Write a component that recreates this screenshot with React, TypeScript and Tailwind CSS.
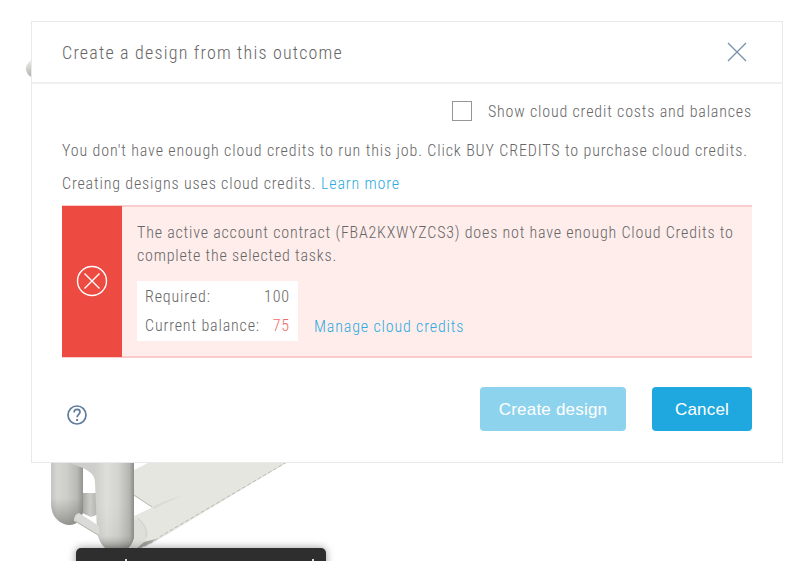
function ModelView() {
  return (
    <svg className="absolute inset-0 h-[561px] w-[800px]" viewBox="0 0 800 561" aria-hidden="true">
      <defs>
        <linearGradient id="tubeBack" x1="51" x2="83" y1="0" y2="0" gradientUnits="userSpaceOnUse">
          <stop offset="0" stopColor="#c4c5c0" />
          <stop offset="0.2" stopColor="#d5d6d1" />
          <stop offset="0.5" stopColor="#cdcec9" />
          <stop offset="0.82" stopColor="#b8b9b4" />
          <stop offset="1" stopColor="#92938f" />
        </linearGradient>
        <linearGradient id="tubeFront" x1="95" x2="134" y1="0" y2="0" gradientUnits="userSpaceOnUse">
          <stop offset="0" stopColor="#cecfca" />
          <stop offset="0.3" stopColor="#dedfda" />
          <stop offset="0.6" stopColor="#d3d4cf" />
          <stop offset="0.88" stopColor="#b5b6b1" />
          <stop offset="1" stopColor="#8b8c88" />
        </linearGradient>
        <linearGradient id="footShade" x1="0" x2="0" y1="505" y2="552" gradientUnits="userSpaceOnUse">
          <stop offset="0" stopColor="#777872" stopOpacity="0" />
          <stop offset="0.65" stopColor="#777872" stopOpacity="0.08" />
          <stop offset="1" stopColor="#5d5e58" stopOpacity="0.55" />
        </linearGradient>
        <linearGradient id="backShade" x1="0" x2="0" y1="498" y2="526" gradientUnits="userSpaceOnUse">
          <stop offset="0" stopColor="#777872" stopOpacity="0" />
          <stop offset="1" stopColor="#666760" stopOpacity="0.6" />
        </linearGradient>
        <linearGradient id="crossPiece" x1="83" x2="97" y1="0" y2="0" gradientUnits="userSpaceOnUse">
          <stop offset="0" stopColor="#a9aaa5" />
          <stop offset="0.5" stopColor="#cbccc7" />
          <stop offset="1" stopColor="#b3b4af" />
        </linearGradient>
        <linearGradient id="knob" x1="26" x2="31" y1="62" y2="76" gradientUnits="userSpaceOnUse">
          <stop offset="0" stopColor="#e9e9e6" />
          <stop offset="1" stopColor="#b4b5af" />
        </linearGradient>
      </defs>
      <path d="M32 60 C28 62 25.500 66 26 70 C27 74 29 76 32 77.500 Z" fill="url(#knob)" />
      <path d="M83 493 L97 493 L99 514 L91 517 L80 512 Z" fill="url(#crossPiece)" />
      <path d="M132 470 L152 460 H291 L158 540 Q145 549 130 549 Z" fill="#e6e6e1" />
      <path d="M132 460 H154 L132 471 Z" fill="#fff" />
      <path d="M133 495.500 L152 507.500 L133 516.500 Z" fill="#fff" />
      <path d="M134 495 L152 507" stroke="#bbbbb6" strokeWidth="1" />
      <path d="M152 507 Q168 499 182 496 Q168 501 154 509 Z" fill="#d9dad4" />
      <path d="M133 519 Q147 521 148 535 Q145 545 130 549 Z" fill="#dfdfda" />
      <path d="M137 518 Q148 525 146 538" stroke="#d3d4ce" strokeWidth="1.200" fill="none" />
      <path d="M287 462 L161 536 Q151 544 138 549" stroke="#b9bab3" strokeWidth="1" strokeDasharray="4 2" fill="none" />
      <path d="M156 539 Q149 545 136 549 L144 542 Z" fill="#a1a29b" />
      <path d="M51 460 H83 V512 C81 520 77 525 69 525 C58 524 51 515 51 504 Z" fill="url(#tubeBack)" />
      <path d="M51 490 H83 V512 C81 520 77 525 69 525 C58 524 51 515 51 504 Z" fill="url(#backShade)" />
      <path d="M70 460 H134 V538 C131 548 125 553 116 554 C105 551 99 543 97 532 L95 482 C95 474 88 469 72 464 Z" fill="url(#tubeFront)" />
      <path d="M96 500 H134 V538 C131 548 125 553 116 554 C105 551 99 543 97 532 Z" fill="url(#footShade)" />
      <path d="M79 513 L99 526 V536 L74 521 Q74 514 79 513 Z" fill="#dadbd6" />
      <path d="M75 521 L99 535.500" stroke="#b5b5b0" strokeWidth="1" />
    </svg>
  );
}

function HelpIcon() {
  return (
    <svg className="size-5" viewBox="0 0 20 20" fill="none" stroke="#5f7c9d" aria-hidden="true">
      <circle cx="10" cy="10" r="9" strokeWidth="1.700" />
      <path d="M7.100 7.600 C7.100 5.300 8.300 4.300 10.100 4.300 C11.900 4.300 13 5.400 13 6.900 C13 9.300 10.100 9.300 10.100 12.300" strokeWidth="1.700" />
      <path d="M10.100 14 V16" strokeWidth="1.900" />
    </svg>
  );
}

export default function App() {
  return (
    <div className="relative h-[561px] w-[800px] overflow-hidden bg-white pt-[21px] pl-[31px] font-[Roboto,sans-serif]">
      <ModelView />
      <div className="absolute top-[548px] left-[76px] flex h-10 w-[250px] justify-between rounded-[5px] bg-[#2e2e2e] px-[49px] pt-[11px] shadow-[0_0_9px_rgba(0,0,0,0.4)]">
        <span className="h-3 w-[2px] bg-[#dedede]" />
        <span className="-mr-[37px] h-3 w-[2px] bg-[#dedede]" />
      </div>

      <section className="relative flex h-[442px] w-[752px] flex-col border border-[#e9e9e9] bg-white text-[16px] font-[350] text-[#666] [font-stretch:75%]" role="dialog">
        <header className="flex h-[62px] shrink-0 items-center justify-between border-b-2 border-[#f0f0f0] pr-[35px] pl-[30px]">
          <h1 className="pt-[2px] text-[18px] leading-6 tracking-[1.2px] whitespace-nowrap">Create a design from this outcome</h1>
          <button aria-label="Close">
            <svg className="size-5" viewBox="0 0 20 20" stroke="#7891aa" strokeWidth="1.300">
              <path d="M1 1 L19 19 M19 1 L1 19" />
            </svg>
          </button>
        </header>

        <div className="flex flex-1 flex-col px-[30px] pt-[17px]">
          <label className="flex h-5 items-center justify-end">
            <span className="mr-4 size-5 border border-[#969696] bg-white" />
            <span className="pt-0.5 tracking-[0.83px] whitespace-nowrap">Show cloud credit costs and balances</span>
          </label>
          <p className="mt-[19px] h-[22px] leading-[22px] tracking-[0.87px] whitespace-nowrap">
            You don't have enough cloud credits to run this job. Click BUY CREDITS to purchase cloud credits.
          </p>
          <p className="mt-[11px] h-[22px] leading-[22px] tracking-[0.84px] whitespace-nowrap">
            Creating designs uses cloud credits. <a className="text-[#2cabdf]">Learn more</a>
          </p>

          <div className="mt-[10px] flex h-[153px] border-y-2 border-[#facccc] bg-[#feedeb]">
            <div className="-my-px flex w-[60px] shrink-0 items-center justify-center bg-[#ed4a42] pb-px">
              <svg className="size-8" viewBox="0 0 32 32" fill="none" stroke="#fff" strokeWidth="1.400">
                <circle cx="16" cy="16" r="14.500" />
                <path d="M8.500 8.500 L23.500 23.500 M23.500 8.500 L8.500 23.500" />
              </svg>
            </div>
            <div className="flex flex-col pt-[15px] pl-[15px]">
              <p className="leading-[22.5px] tracking-[0.8px] whitespace-nowrap">
                The active account contract (FBA2KXWYZCS3) does not have enough Cloud Credits to
                <br />
                complete the selected tasks.
              </p>
              <div className="mt-[14px] flex items-end">
                <dl className="grid h-[60px] w-[161px] grid-cols-[1fr_auto] grid-rows-2 items-center bg-white px-2 pt-px tracking-[0.85px]">
                  <dt>Required:</dt>
                  <dd className="justify-self-end">100</dd>
                  <dt className="whitespace-nowrap">Current balance:</dt>
                  <dd className="justify-self-end text-[#f36a67]">75</dd>
                </dl>
                <a className="ml-4 h-[30px] leading-[31px] tracking-[0.85px] whitespace-nowrap text-[#2cabdf]">Manage cloud credits</a>
              </div>
            </div>
          </div>

          <footer className="mt-[29px] flex h-11 items-center [font-family:'Liberation_Sans',Arial,sans-serif] text-[17px] font-normal text-white">
            <button className="mt-3 ml-[5px]" aria-label="Help">
              <HelpIcon />
            </button>
            <button className="ml-auto h-11 w-[146px] rounded bg-[#8ed3ee] pt-0.5 tracking-[0.2px]">Create design</button>
            <button className="ml-[26px] h-11 w-[100px] rounded bg-[#1fa8df] pt-0.5 tracking-[0.2px]">Cancel</button>
          </footer>
        </div>
      </section>
    </div>
  );
}
